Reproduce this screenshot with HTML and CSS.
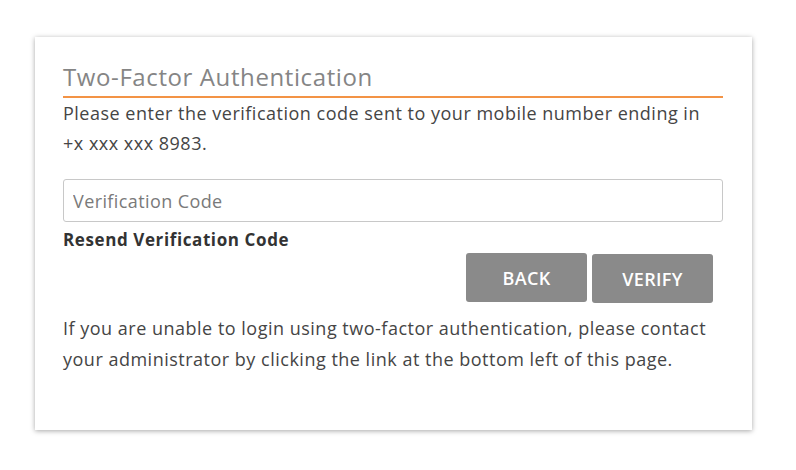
FILE: index.html
```html
<!DOCTYPE html>
<html>
<head>
<meta charset="utf-8">
<link rel="stylesheet" href="styles.css">
</head>
<body>
<div class="card">
  <h1 class="title">Two-Factor Authentication</h1>
  <div class="rule"></div>
  <p class="intro">Please enter the verification code sent to your mobile number ending in<br>+x xxx xxx 8983.</p>
  <input class="code" type="text" placeholder="Verification Code">
  <a class="resend">Resend Verification Code</a>
  <div class="actions">
    <button class="btn btn-back">BACK</button>
    <button class="btn btn-verify">VERIFY</button>
  </div>
  <p class="help">If you are unable to login using two-factor authentication, please contact your administrator by clicking the link at the bottom left of this page.</p>
</div>
</body>
</html>
```

FILE: styles.css
```css
html, body {
  margin: 0;
  padding: 0;
  background: #fff;
}
body {
  font-family: "Open Sans", Lato, sans-serif;
  color: #454545;
  padding: 37px 0 40px 35px;
}
.card {
  width: 717px;
  height: 393px;
  box-sizing: border-box;
  padding: 25px 29px 0 28px;
  background: #fff;
  box-shadow: 0 1px 5px rgba(0, 0, 0, 0.35);
  display: flex;
  flex-direction: column;
}
.title {
  margin: 0;
  font-size: 24px;
  font-weight: 400;
  letter-spacing: 0.6px;
  color: #858585;
  line-height: 30px;
  padding-bottom: 4px;
}
.rule {
  height: 2px;
  background: #f39345;
}
.intro {
  margin: 0;
  font-size: 18px;
  letter-spacing: 0.5px;
  line-height: 30px;
}
.code {
  margin-top: 21px;
  height: 43px;
  box-sizing: border-box;
  border: 1px solid #c8c8c8;
  border-radius: 3px;
  padding: 0 9px;
  font-family: inherit;
  font-size: 18px;
  letter-spacing: 0.4px;
  color: #444;
  outline: none;
}
.code::placeholder {
  color: #7a7a7a;
}
.resend {
  margin-top: 8px;
  font-size: 17px;
  font-weight: 700;
  letter-spacing: 0.6px;
  line-height: 20px;
  color: #333;
  align-self: flex-start;
}
.actions {
  margin-top: 3px;
  display: flex;
  justify-content: flex-end;
  align-items: flex-start;
  gap: 5px;
  padding-right: 10px;
}
.btn {
  width: 121px;
  height: 49px;
  border: none;
  border-radius: 3px;
  background: #8a8a8a;
  color: #fff;
  font-family: inherit;
  font-size: 18px;
  font-weight: 600;
  letter-spacing: 0.3px;
  padding: 0;
}
.btn-verify {
  margin-top: 1px;
}
.help {
  margin: 10px 0 0;
  font-size: 18px;
  letter-spacing: 0.5px;
  line-height: 31px;
}
```
